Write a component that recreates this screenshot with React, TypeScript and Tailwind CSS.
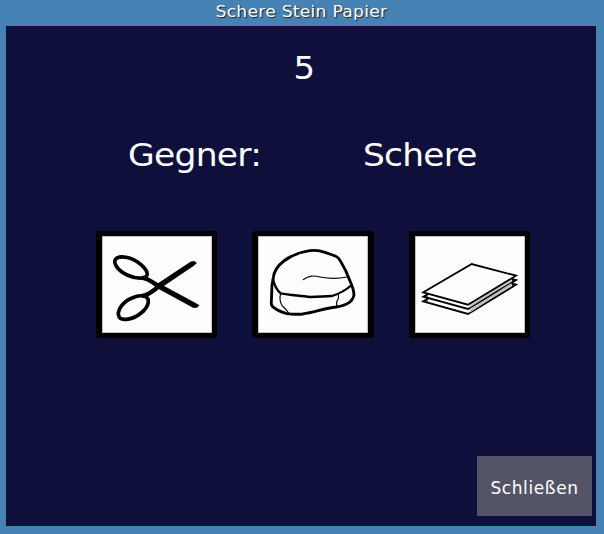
import React from "react";

function Card({ label, className, children }: { label: string; className: string; children: React.ReactNode }) {
  return (
    <button
      aria-label={label}
      className={`h-[107px] rounded-[3px] border-y-5 border-l-6 border-black bg-[#fdfdfd] ${className}`}
    >
      <svg viewBox="36 33 330 291" className="block h-[97px] w-[110px]" fill="none" stroke="#000" strokeLinejoin="round">
        <rect x="36.5" y="33.5" width="329" height="290" stroke="#777" strokeWidth="2" />
        {children}
      </svg>
    </button>
  );
}

export default function App() {
  return (
    <main className="flex h-[534px] w-[604px] flex-col bg-[#4682b4] pr-2 pb-2 pl-1.5 font-['DejaVu_Sans',sans-serif] text-white">
      <h1 className="h-[26px] text-center text-[15.5px] leading-[24px] tracking-[0.2px] [text-shadow:1px_1px_1px_#222]">
        <span className="inline-block scale-x-[1.11]">Schere Stein Papier</span>
      </h1>
      <section className="flex h-[500px] flex-col bg-[#0f0f3c]">
        <div className="h-[82px] pl-[7px] text-center text-[32px] leading-[84px]">
          <span className="inline-block scale-x-[1.06]">5</span>
        </div>
        <div className="flex h-[92px] pl-[122px] text-[32px] leading-[95px] tracking-[-0.7px]">
          <span className="w-[234.5px] origin-left scale-x-[1.08]">Gegner:</span>
          <span className="origin-left scale-x-[1.075]">Schere</span>
        </div>
        <div className="mt-[31px] flex pl-[90px]">
          <Card label="Schere" className="mr-[35px] w-[121px] border-r-5">
            <g strokeWidth="11">
              <path d="M76 104C85 89 126 95 153 119C176 139 178 156 157 159C130 162 93 146 79 124C74 116 73 109 76 104Z" />
              <path d="M88 277C78 260 96 231 126 219C153 207 177 211 175 231C173 253 141 280 110 283C100 284 92 282 88 277Z" />
              <path d="M156 158C178 162 190 174 207 184M156 213C178 210 190 196 207 184" strokeWidth="13" />
            </g>
            <path
              d="M200 178L300 112Q306 108 313 109L320 114L311 122L212 189Z M212 178L316 234L328 241L320 248H310L200 188Z"
              fill="#000"
              strokeWidth="1"
            />
          </Card>
          <Card label="Stein" className="mr-[35px] w-[122px] border-r-6">
            <path
              d="M82 158C86 119 132 88 180 79Q210 72 237 82L268 93Q278 97 284 109L299 137L317 180Q324 197 324 209C321 231 299 242 271 246C235 250 205 262 170 267Q144 269 123 266Q97 260 80 245Q75 241 76 232L78 181Z"
              strokeWidth="8.5"
            />
            <path d="M80 160Q88 193 104 205C132 211 160 211 193 216Q232 215 258 213Q291 203 317 180" strokeWidth="7" />
            <path d="M171 164C190 150 204 152 222 156C252 162 275 162 303 156M104 205Q98 226 109 243Q119 251 128 264M277 208Q279 222 272 230V245" strokeWidth="3.5" />
          </Card>
          <Card label="Papier" className="w-[121px] border-r-5">
            <g strokeWidth="5.5" strokeLinejoin="miter" fill="#fdfdfd">
              <path d="M61 229L206 144L339 179L195 267Z" />
              <path d="M61 215L206 130L339 165L195 252Z" />
              <path d="M200 263L325 182V174L200 255ZM200 248L325 168V160L200 241Z" fill="#bbb" stroke="none" />
              <path d="M61 202L206 117L339 152L195 239Z" />
            </g>
            <path d="M72 204V232M329 156V184" strokeWidth="3" />
          </Card>
        </div>
        <button className="mt-auto mr-1 mb-2.5 h-[60px] w-[115px] self-end bg-[#545469] pt-1 text-[17px] leading-6 tracking-[0.6px]">
          Schließen
        </button>
      </section>
    </main>
  );
}
